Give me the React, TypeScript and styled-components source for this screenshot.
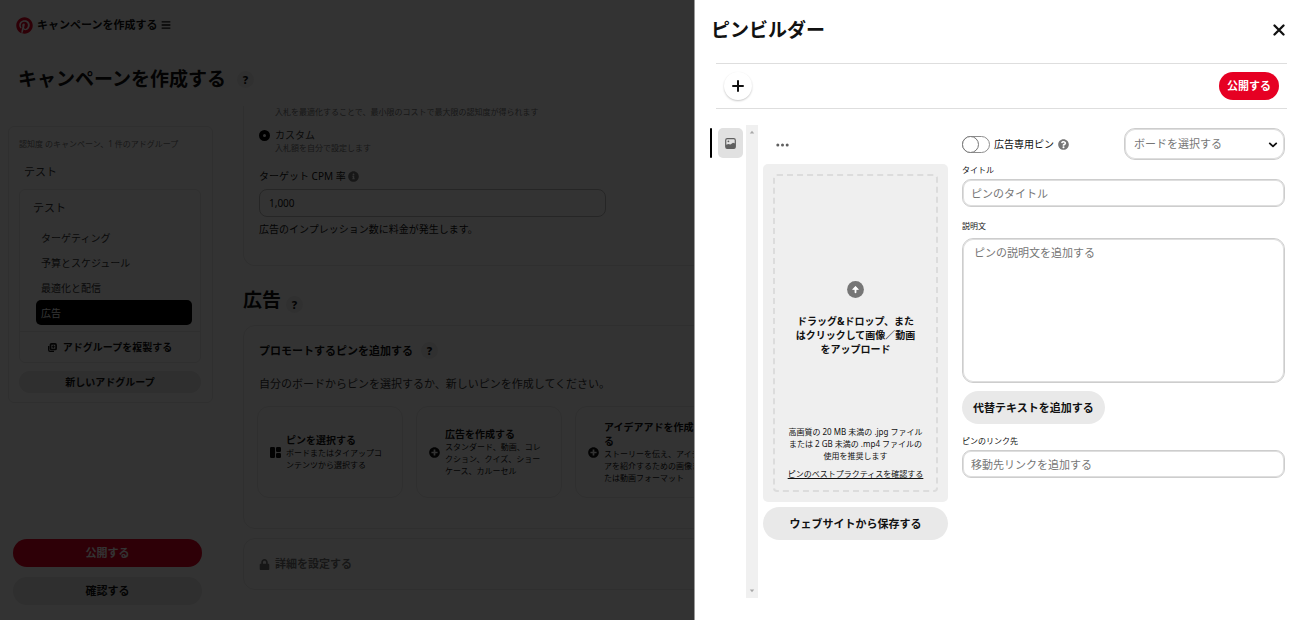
import React from 'react';
import styled, { createGlobalStyle, css } from 'styled-components';
import { FaBars, FaInfoCircle, FaLock, FaPinterest, FaPlusCircle, FaQuestionCircle } from 'react-icons/fa';

const GlobalStyle = createGlobalStyle`
  *, *::before, *::after { box-sizing: border-box; }
  body {
    margin: 0;
    background: #fff;
    color: #111;
    font-family: "Noto Sans", "Noto Sans CJK JP", sans-serif;
    font-size: 10px;
    line-height: 14px;
  }
  button, input, select, textarea { font: inherit; color: inherit; }
  button { cursor: pointer; border: 0; padding: 0; background: none; }
  h1, h2, h3, p, ul { margin: 0; padding: 0; }
  svg { display: block; flex: none; }
`;

/* ---------- shared pieces ---------- */

const PillButton = styled.button<{ $tone?: 'red' | 'gray'; $height?: number; $size?: number }>`
  height: ${({ $height = 28 }) => $height}px;
  padding: 0 8px;
  border-radius: 999px;
  font-size: ${({ $size = 11 }) => $size}px;
  font-weight: 700;
  line-height: 16px;
  white-space: nowrap;
  background: ${({ $tone = 'gray' }) => ($tone === 'red' ? '#e60023' : '#e9e9e9')};
  color: ${({ $tone = 'gray' }) => ($tone === 'red' ? '#fff' : '#111')};
`;

const HelpButton = styled.button`
  width: 17px;
  height: 17px;
  border-radius: 50%;
  background: #efefef;
  font-size: 11px;
  font-weight: 800;
  line-height: 17px;
  text-align: center;
`;

const SmallText = styled.p<{ $muted?: boolean }>`
  font-size: 8px;
  line-height: 12px;
  color: ${({ $muted }) => ($muted ? '#767676' : '#111')};
`;

/* ---------- campaign page ---------- */

const Page = styled.div`
  min-height: 100vh;
  display: flex;
  flex-direction: column;
`;

const TopBar = styled.header`
  height: 50px;
  padding: 0 16px;
  display: flex;
  align-items: center;
  gap: 4px;
`;

const TopBarTitle = styled.span`
  font-size: 11px;
  font-weight: 700;
`;

const IconButton = styled.button`
  display: inline-flex;
  align-items: center;
  justify-content: center;
`;

const PageTitleRow = styled.div`
  height: 56px;
  padding: 2px 18px 0;
  display: flex;
  align-items: center;
  gap: 11px;
`;

const HeadingText = styled.h1`
  font-size: 19px;
  line-height: 26px;
  font-weight: 700;
`;

const Body = styled.div`
  flex: 1;
  display: flex;
  gap: 30px;
`;

const Sidebar = styled.aside`
  flex: none;
  width: 213px;
  padding: 20px 0 15px 8px;
  display: flex;
  flex-direction: column;
  justify-content: space-between;
`;

const CampaignPanel = styled.nav`
  border: 1px solid #e9e9e9;
  border-radius: 6px;
  padding: 11px 11px 9px 10px;
`;

const TreeName = styled.p`
  font-size: 11px;
  line-height: 16px;
  color: #333;
`;

const CampaignName = styled(TreeName)`
  padding: 14px 5px 9px;
`;

const GroupCard = styled.div`
  border: 1px solid #e9e9e9;
  border-radius: 6px;
`;

const GroupName = styled(TreeName)`
  padding: 10px 13px 9px;
`;

const GroupList = styled.ul`
  list-style: none;
  padding: 0 8px 6px 16px;
`;

const GroupLink = styled.a<{ $active?: boolean }>`
  display: flex;
  align-items: center;
  height: 25px;
  padding: 0 5px;
  border-radius: 5px;
  text-decoration: none;
  color: ${({ $active }) => ($active ? '#fff' : '#333')};
  background: ${({ $active }) => ($active ? '#000' : 'transparent')};
`;

const DuplicateButton = styled.button`
  width: 100%;
  height: 31px;
  border-top: 1px solid #e9e9e9;
  display: flex;
  align-items: center;
  justify-content: center;
  gap: 6px;
  font-weight: 700;
`;

const NewGroupButton = styled(PillButton)`
  width: 100%;
  margin-top: 8px;
`;

const SidebarActions = styled.div`
  display: flex;
  flex-direction: column;
  gap: 10px;
  padding: 0 11px 0 5px;
`;

const Main = styled.main`
  flex: 1;
  min-width: 0;
  padding-right: 24px;
`;

const Card = styled.section<{ $continued?: boolean }>`
  border: 1px solid #e9e9e9;
  border-radius: 12px;
  padding: 16px 15px;
  ${({ $continued }) =>
    $continued &&
    css`
      border-top: 0;
      border-radius: 0 0 12px 12px;
      padding-top: 0;
      padding-bottom: 29px;
    `}
`;

const OptionHint = styled(SmallText)`
  padding-left: 16px;
`;

const RadioLabel = styled.label`
  display: flex;
  align-items: center;
  gap: 5px;
  padding-top: 10px;
  color: #333;
`;

const Radio = styled.input`
  appearance: none;
  width: 11px;
  height: 11px;
  margin: 0;
  border: 4px solid #000;
  border-radius: 50%;
  background: #fff;
`;

const BidLabel = styled.label`
  display: flex;
  align-items: center;
  gap: 2px;
  padding: 15px 0 6px;
`;

const BidInput = styled.input`
  display: block;
  width: 347px;
  height: 28px;
  padding: 0 9px;
  border: 1px solid #bdbdbd;
  border-radius: 8px;
  background: #fff;
`;

const BidNote = styled.p`
  padding-top: 5px;
`;

const SectionHeading = styled.div`
  display: flex;
  align-items: flex-end;
  gap: 5px;
  padding: 21px 0 12px;
`;

const CardTitleRow = styled.div`
  display: flex;
  align-items: center;
  gap: 8px;
`;

const CardTitle = styled.h3`
  font-size: 11px;
  line-height: 16px;
  font-weight: 700;
`;

const CardLead = styled.p`
  font-size: 11px;
  line-height: 16px;
  color: #333;
  padding: 17px 0 14px;
`;

const ChoiceRow = styled.div`
  display: flex;
  gap: 13px;
  padding-bottom: 14px;
  margin: 0 -2px;
`;

const Choice = styled.button`
  flex: none;
  width: 146px;
  min-height: 92px;
  padding: 0 15px 0 12px;
  border: 1px solid #e9e9e9;
  border-radius: 12px;
  display: flex;
  align-items: center;
  gap: 5px;
  text-align: left;
`;

const ChoiceText = styled.span`
  flex: 1;
  font-size: 8px;
  line-height: 12px;
`;

const ChoiceTitle = styled.strong`
  display: block;
  font-size: 10px;
  line-height: 14px;
`;

const LockedCard = styled(Card)`
  margin-top: 9px;
  display: flex;
  align-items: center;
  gap: 5px;
  height: 52px;
  color: #767676;
`;

const Backdrop = styled.div`
  position: fixed;
  inset: 0;
  background: rgba(0, 0, 0, 0.8);
`;

/* ---------- pin builder drawer ---------- */

const Drawer = styled.section`
  position: fixed;
  top: 0;
  right: 0;
  bottom: 0;
  width: min(605px, 100%);
  overflow: auto;
  background: #fff;
  border-left: 1px solid #999;
  display: flex;
  flex-direction: column;
`;

const DrawerHeader = styled.header`
  height: 63px;
  padding: 0 14px 3px 16px;
  display: flex;
  align-items: center;
  justify-content: space-between;
`;

const Toolbar = styled.div`
  height: 46px;
  margin: 0 12px 0 21px;
  padding: 0 8px;
  border-top: 1px solid #dedede;
  border-bottom: 1px solid #dedede;
  display: flex;
  align-items: center;
  justify-content: space-between;
`;

const AddButton = styled(IconButton)`
  width: 28px;
  height: 28px;
  border-radius: 50%;
  background: #fff;
  box-shadow: 0 1px 2px rgba(0, 0, 0, 0.22);
`;

const Builder = styled.div`
  flex: 1;
  display: flex;
  padding: 16px 14px 22px 15px;
`;

const DraftStrip = styled.div`
  display: flex;
  align-items: flex-start;
  gap: 6px;
  padding: 3px 3px 0 0;
`;

const DraftMarker = styled.span`
  width: 2px;
  height: 30px;
  border-radius: 1px;
  background: #000;
`;

const DraftThumb = styled.button`
  width: 25px;
  height: 30px;
  border-radius: 5px;
  background: #e1e1e1;
  display: flex;
  align-items: center;
  justify-content: center;
`;

const ScrollTrack = styled.div`
  width: 12px;
  background: #f0f0f0;
  display: flex;
  flex-direction: column;
  justify-content: space-between;
  align-items: center;
  padding: 5px 0;
`;

const MediaColumn = styled.div`
  width: 185px;
  margin: 0 14px 0 5px;
  display: flex;
  flex-direction: column;
`;

const MoreButton = styled(IconButton)`
  width: 38px;
  height: 39px;
`;

const UploadBox = styled.div`
  height: 338px;
  padding: 10px;
  border-radius: 5px;
  background: #efefef;
`;

const DropArea = styled.div`
  height: 100%;
  padding: 0 12px 10px;
  border: 2px dashed #dcdcdc;
  border-radius: 4px;
  display: flex;
  flex-direction: column;
  align-items: center;
  text-align: center;
`;

const UploadPrompt = styled.div`
  flex: 1;
  display: flex;
  flex-direction: column;
  align-items: center;
  gap: 16px;
  padding-top: 105px;
`;

const UploadTitle = styled.p`
  width: 124px;
  font-weight: 700;
`;

const TipsLink = styled.a`
  margin-top: 6px;
  font-size: 8px;
  line-height: 12px;
  color: #111;
  white-space: nowrap;
`;

const SaveButton = styled(PillButton)`
  margin-top: 5px;
`;

const Form = styled.form`
  flex: 1;
  min-width: 0;
  padding-top: 3px;
`;

const FormTop = styled.div`
  display: flex;
  align-items: center;
  justify-content: space-between;
`;

const SwitchLabel = styled.label`
  display: flex;
  align-items: center;
  gap: 4px;
`;

const Switch = styled.input`
  appearance: none;
  position: relative;
  width: 28px;
  height: 17px;
  margin: 0;
  border: 1px solid #8e8e8e;
  border-radius: 9px;
  background: #fff;

  &::before {
    content: '';
    position: absolute;
    top: -1px;
    left: -1px;
    width: 17px;
    height: 17px;
    border: 1px solid #767676;
    border-radius: 50%;
    background: #fff;
  }
`;

const SelectWrap = styled.div`
  position: relative;
  width: 161px;
  color: #111;

  svg {
    position: absolute;
    right: 7px;
    top: 12px;
    pointer-events: none;
  }
`;

const controlStyle = css`
  display: block;
  width: 100%;
  border: 1px solid #cdcdcd;
  box-shadow: inset 0 0 0 1px #dedede;
  background: #fff;
  font-size: 11px;
  line-height: 16px;
  &::placeholder {
    color: #767676;
    opacity: 1;
  }
`;

const BoardSelect = styled.select`
  ${controlStyle}
  appearance: none;
  height: 32px;
  padding: 0 9px;
  border-radius: 11px;
  color: #767676;
`;

const FieldLabel = styled.label`
  display: block;
  padding: 4px 0;
  font-size: 8px;
  line-height: 11px;
`;

const TextField = styled.input`
  ${controlStyle}
  height: 28px;
  padding: 0 8px;
  border-radius: 9px;
`;

const TextArea = styled.textarea`
  ${controlStyle}
  height: 145px;
  padding: 6px 11px;
  border-radius: 11px;
  resize: none;
`;

const FieldGroup = styled.div<{ $top?: number; $labelGap?: number }>`
  padding-top: ${({ $top = 0 }) => $top}px;
  display: flex;
  flex-direction: column;
  gap: ${({ $labelGap = 0 }) => $labelGap}px;
`;

const AltButton = styled(PillButton)`
  margin-top: 8px;
  padding: 0 11px;
`;

/* ---------- icons ---------- */

const PlusIcon = () => (
  <svg width="12" height="12" viewBox="0 0 12 12" stroke="#111" strokeWidth="2" strokeLinecap="round">
    <path d="M6 1v10M1 6h10" />
  </svg>
);

const CloseIcon = () => (
  <svg width="12" height="12" viewBox="0 0 12 12" stroke="#111" strokeWidth="2.3" strokeLinecap="round">
    <path d="M1.5 1.5l9 9M10.5 1.5l-9 9" />
  </svg>
);

const DotsIcon = () => (
  <svg width="13" height="4" viewBox="0 0 13 4" fill="#5f5f5f">
    <circle cx="1.8" cy="2" r="1.5" />
    <circle cx="6.5" cy="2" r="1.5" />
    <circle cx="11.2" cy="2" r="1.5" />
  </svg>
);

const ImageIcon = () => (
  <svg width="11" height="11" viewBox="0 0 11 11">
    <rect x="0.7" y="0.7" width="9.6" height="9.6" rx="1.6" fill="none" stroke="#5f5f5f" strokeWidth="1.2" />
    <path d="M1 6.8l2.4-.9 2 .5 2.6-1.6 2.2.8v3.6c0 .6-.4 1-1 1H2c-.6 0-1-.4-1-1z" fill="#5f5f5f" />
    <circle cx="3.4" cy="3.3" r="0.9" fill="#5f5f5f" />
  </svg>
);

const UploadIcon = () => (
  <svg width="17" height="17" viewBox="0 0 17 17">
    <circle cx="8.5" cy="8.5" r="8.4" fill="#767676" />
    <path d="M8.5 11.3V7" fill="none" stroke="#fff" strokeWidth="1.8" strokeLinecap="round" />
    <path d="M5.6 8.4L8.5 5.3l2.9 3.1z" fill="#fff" stroke="#fff" strokeWidth="0.8" strokeLinejoin="round" />
  </svg>
);

const ChevronIcon = () => (
  <svg width="10" height="10" viewBox="0 0 10 10" fill="none" stroke="#111" strokeWidth="1.8" strokeLinecap="round" strokeLinejoin="round">
    <path d="M1.8 3.4L5 6.4l3.2-3" />
  </svg>
);

const ArrowIcon = ({ down }: { down?: boolean }) => (
  <svg width="6" height="4" viewBox="0 0 6 4" fill="#a8a8a8">
    <path d={down ? 'M.8.5h4.4L3 3.2z' : 'M.8 3.5h4.4L3 .8z'} />
  </svg>
);

const DuplicateIcon = () => (
  <svg width="9" height="9" viewBox="0 0 9 9" fill="none" stroke="#111">
    <rect x="2.5" y="0.9" width="5.6" height="5.6" rx="1" strokeWidth="1.7" />
    <path d="M5.3 2.2v3M3.8 3.7h3" strokeWidth="1.1" />
    <path d="M.7 3v4c0 .8.5 1.3 1.3 1.3h4" strokeWidth="1.3" />
  </svg>
);

const BoardIcon = () => (
  <svg width="11" height="11" viewBox="0 0 11 11" fill="#111">
    <rect x="0" y="0" width="5" height="11" rx="1.2" />
    <rect x="6" y="0" width="5" height="5" rx="1.2" />
    <rect x="6" y="6" width="5" height="5" rx="1.2" />
  </svg>
);

/* ---------- data ---------- */

const steps = ['ターゲティング', '予算とスケジュール', '最適化と配信', '広告'];

const choices = [
  { icon: <BoardIcon />, title: 'ピンを選択する', text: 'ボードまたはタイアップコンテンツから選択する' },
  { icon: <FaPlusCircle size={11} />, title: '広告を作成する', text: 'スタンダード、動画、コレクション、クイズ、ショーケース、カルーセル' },
  { icon: <FaPlusCircle size={11} />, title: 'アイデアアドを作成する', text: 'ストーリーを伝え、アイデアを紹介するための画像または動画フォーマット' },
];

function CampaignSidebar() {
  return (
    <Sidebar>
      <CampaignPanel>
        <SmallText $muted>認知度 のキャンペーン、1 件のアドグループ</SmallText>
        <CampaignName>テスト</CampaignName>
        <GroupCard>
          <GroupName>テスト</GroupName>
          <GroupList>
            {steps.map((step) => (
              <li key={step}>
                <GroupLink href="#ads" $active={step === '広告'}>{step}</GroupLink>
              </li>
            ))}
          </GroupList>
          <DuplicateButton type="button">
            <DuplicateIcon />
            アドグループを複製する
          </DuplicateButton>
        </GroupCard>
        <NewGroupButton type="button" $height={22} $size={10}>新しいアドグループ</NewGroupButton>
      </CampaignPanel>
      <SidebarActions>
        <PillButton type="button" $tone="red">公開する</PillButton>
        <PillButton type="button">確認する</PillButton>
      </SidebarActions>
    </Sidebar>
  );
}

function CampaignMain() {
  return (
    <Main>
      <Card $continued>
        <OptionHint $muted>入札を最適化することで、最小限のコストで最大限の認知度が得られます</OptionHint>
        <RadioLabel>
          <Radio type="radio" name="bid" defaultChecked />
          カスタム
        </RadioLabel>
        <OptionHint $muted>入札額を自分で設定します</OptionHint>
        <BidLabel htmlFor="bid-rate">
          ターゲット CPM 率 <FaInfoCircle size={11} color="#767676" />
        </BidLabel>
        <BidInput id="bid-rate" defaultValue="1,000" />
        <BidNote>広告のインプレッション数に料金が発生します。</BidNote>
      </Card>
      <SectionHeading id="ads">
        <HeadingText as="h2">広告</HeadingText>
        <HelpButton type="button">?</HelpButton>
      </SectionHeading>
      <Card>
        <CardTitleRow>
          <CardTitle>プロモートするピンを追加する</CardTitle>
          <HelpButton type="button">?</HelpButton>
        </CardTitleRow>
        <CardLead>自分のボードからピンを選択するか、新しいピンを作成してください。</CardLead>
        <ChoiceRow>
          {choices.map((choice) => (
            <Choice type="button" key={choice.title}>
              {choice.icon}
              <ChoiceText>
                <ChoiceTitle>{choice.title}</ChoiceTitle>
                {choice.text}
              </ChoiceText>
            </Choice>
          ))}
        </ChoiceRow>
      </Card>
      <LockedCard>
        <FaLock size={11} />
        <CardTitle>詳細を設定する</CardTitle>
      </LockedCard>
    </Main>
  );
}

function PinBuilder() {
  return (
    <Drawer role="dialog" aria-labelledby="builder-title">
      <DrawerHeader>
        <HeadingText as="h2" id="builder-title">ピンビルダー</HeadingText>
        <IconButton type="button" aria-label="閉じる"><CloseIcon /></IconButton>
      </DrawerHeader>
      <Toolbar>
        <AddButton type="button" aria-label="追加"><PlusIcon /></AddButton>
        <PillButton type="button" $tone="red">公開する</PillButton>
      </Toolbar>
      <Builder>
        <DraftStrip>
          <DraftMarker />
          <DraftThumb type="button" aria-label="ピン"><ImageIcon /></DraftThumb>
        </DraftStrip>
        <ScrollTrack>
          <ArrowIcon />
          <ArrowIcon down />
        </ScrollTrack>
        <MediaColumn>
          <MoreButton type="button" aria-label="その他"><DotsIcon /></MoreButton>
          <UploadBox>
            <DropArea>
              <UploadPrompt>
                <UploadIcon />
                <UploadTitle>ドラッグ&amp;ドロップ、またはクリックして画像／動画をアップロード</UploadTitle>
              </UploadPrompt>
              <SmallText>高画質の 20 MB 未満の .jpg ファイルまたは 2 GB 未満の .mp4 ファイルの使用を推奨します</SmallText>
              <TipsLink href="#tips">ピンのベストプラクティスを確認する</TipsLink>
            </DropArea>
          </UploadBox>
          <SaveButton type="button" $height={33}>ウェブサイトから保存する</SaveButton>
        </MediaColumn>
        <Form>
          <FormTop>
            <SwitchLabel>
              <Switch type="checkbox" role="switch" />
              広告専用ピン
              <FaQuestionCircle size={11} color="#767676" />
            </SwitchLabel>
            <SelectWrap>
              <BoardSelect aria-label="ボード" defaultValue="">
                <option value="">ボードを選択する</option>
              </BoardSelect>
              <ChevronIcon />
            </SelectWrap>
          </FormTop>
          <FieldGroup>
            <FieldLabel htmlFor="pin-title">タイトル</FieldLabel>
            <TextField id="pin-title" placeholder="ピンのタイトル" />
          </FieldGroup>
          <FieldGroup $top={9} $labelGap={3}>
            <FieldLabel htmlFor="pin-description">説明文</FieldLabel>
            <TextArea id="pin-description" placeholder="ピンの説明文を追加する" />
          </FieldGroup>
          <AltButton type="button" $height={33}>代替テキストを追加する</AltButton>
          <FieldGroup $top={7}>
            <FieldLabel htmlFor="pin-link">ピンのリンク先</FieldLabel>
            <TextField id="pin-link" placeholder="移動先リンクを追加する" />
          </FieldGroup>
        </Form>
      </Builder>
    </Drawer>
  );
}

export default function App() {
  return (
    <>
      <GlobalStyle />
      <Page>
        <TopBar>
          <FaPinterest size={17} color="#e60023" />
          <TopBarTitle>キャンペーンを作成する</TopBarTitle>
          <IconButton type="button" aria-label="メニュー"><FaBars size={10} /></IconButton>
        </TopBar>
        <PageTitleRow>
          <HeadingText>キャンペーンを作成する</HeadingText>
          <HelpButton type="button">?</HelpButton>
        </PageTitleRow>
        <Body>
          <CampaignSidebar />
          <CampaignMain />
        </Body>
      </Page>
      <Backdrop />
      <PinBuilder />
    </>
  );
}
